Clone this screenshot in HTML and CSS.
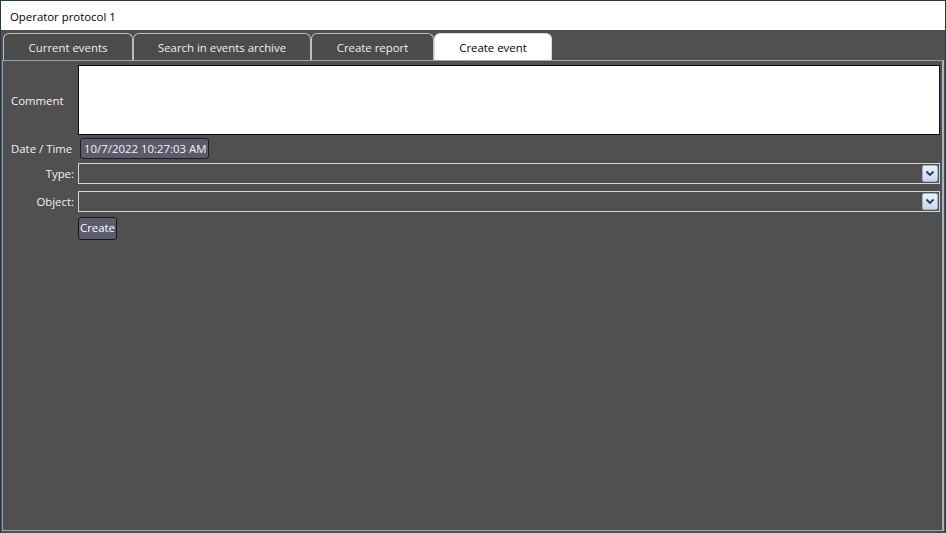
FILE: index.html
```html
<!DOCTYPE html>
<html>
<head>
<meta charset="utf-8">
<link rel="stylesheet" href="styles.css">
</head>
<body>
<div class="window">
  <div class="titlebar">Operator protocol 1</div>
  <div class="tabs">
    <div class="tab t1">Current events</div>
    <div class="tab t2">Search in events archive</div>
    <div class="tab t3">Create report</div>
    <div class="tab t4 active">Create event</div>
  </div>
  <div class="panel">
    <div class="form">
      <div class="label left comment-label">Comment</div>
      <div class="textarea"></div>

      <div class="label left date-label">Date / Time</div>
      <div class="field-row"><div class="datebox">10/7/2022 10:27:03 AM</div></div>

      <div class="label right combo-label">Type:</div>
      <div class="combo"><div class="dd"><svg width="10" height="7" viewBox="0 0 10 7"><path d="M1.5 1.5 L5 5 L8.5 1.5" fill="none" stroke="#24386a" stroke-width="1.8"/></svg></div></div>

      <div class="label right combo-label obj">Object:</div>
      <div class="combo obj"><div class="dd"><svg width="10" height="7" viewBox="0 0 10 7"><path d="M1.5 1.5 L5 5 L8.5 1.5" fill="none" stroke="#24386a" stroke-width="1.8"/></svg></div></div>

      <div></div>
      <div class="field-row"><div class="btn">Create</div></div>
    </div>
  </div>
</div>
</body>
</html>
```
FILE: styles.css
```css
html, body {
  margin: 0;
  padding: 0;
  background: #505050;
}
body {
  font-family: "Open Sans", "Noto Sans", sans-serif;
  font-size: 11.4px;
}
.window {
  width: 946px;
  height: 533px;
  box-sizing: border-box;
  border: 1px solid #1f3b4d;
  border-bottom: none;
  background: #505050;
  display: flex;
  flex-direction: column;
}
.titlebar {
  height: 29px;
  background: #ffffff;
  color: #000;
  line-height: 31px;
  padding-left: 9px;
  flex: none;
}
.tabs {
  display: flex;
  height: 27px;
  padding: 3px 0 0 2px;
  flex: none;
}
.tab {
  box-sizing: border-box;
  height: 27px;
  border: 1px solid #bdbdbd;
  border-bottom: none;
  border-radius: 6px 6px 0 0;
  background: #4c4c4c;
  color: #f0f0f0;
  text-align: center;
  line-height: 27px;
}
.t1 { width: 130px; }
.t2 { width: 178px; }
.t3 { width: 123px; }
.t4 { width: 118px; }
.tab.active {
  background: #ffffff;
  color: #000;
  border-color: #d8d8d8;
}
.panel {
  flex: 1;
  margin: 0 1px 2px 1px;
  border: 1px solid #98a4ae;
  border-right: 2px solid #a8b4be;
  background: #505050;
  padding: 4px 2px 0 0;
}
.form {
  display: grid;
  grid-template-columns: 75px 1fr;
  column-gap: 0;
  color: #f2f2f2;
}
.label {
  display: flex;
  align-items: center;
  box-sizing: border-box;
}
.label.left { padding-left: 8px; }
.label.right { justify-content: flex-end; padding-right: 4px; }
.textarea {
  height: 68px;
  background: #fff;
  border: 1px solid #111;
}
.date-label { margin-top: 3px; height: 21px; }
.field-row { display: flex; }
.datebox {
  margin-top: 3px;
  margin-left: 2px;
  box-sizing: border-box;
  height: 21px;
  padding: 0 2px 0 3px;
  background: #5b5b6c;
  border: 1px solid #1c1c1c;
  border-radius: 3px;
  line-height: 19px;
  color: #f4f4f4;
}
.combo-label { margin-top: 4px; height: 21px; }
.combo {
  margin-top: 4px;
  box-sizing: border-box;
  height: 21px;
  border: 1px solid #d6d6d6;
  display: flex;
  justify-content: flex-end;
  align-items: center;
  padding-right: 1px;
}
.combo-label.obj, .combo.obj { margin-top: 7px; }
.dd {
  box-sizing: border-box;
  width: 16px;
  height: 17px;
  border: 1px solid #9fb2c9;
  border-radius: 2px;
  background: linear-gradient(#eef3fa, #c9d7ea);
  display: flex;
  align-items: center;
  justify-content: center;
}
.btn {
  margin-top: 5px;
  box-sizing: border-box;
  height: 23px;
  padding: 0 1px;
  background: #5b5b6e;
  border: 1px solid #151515;
  border-radius: 3px;
  line-height: 20px;
  color: #fff;
}
```
